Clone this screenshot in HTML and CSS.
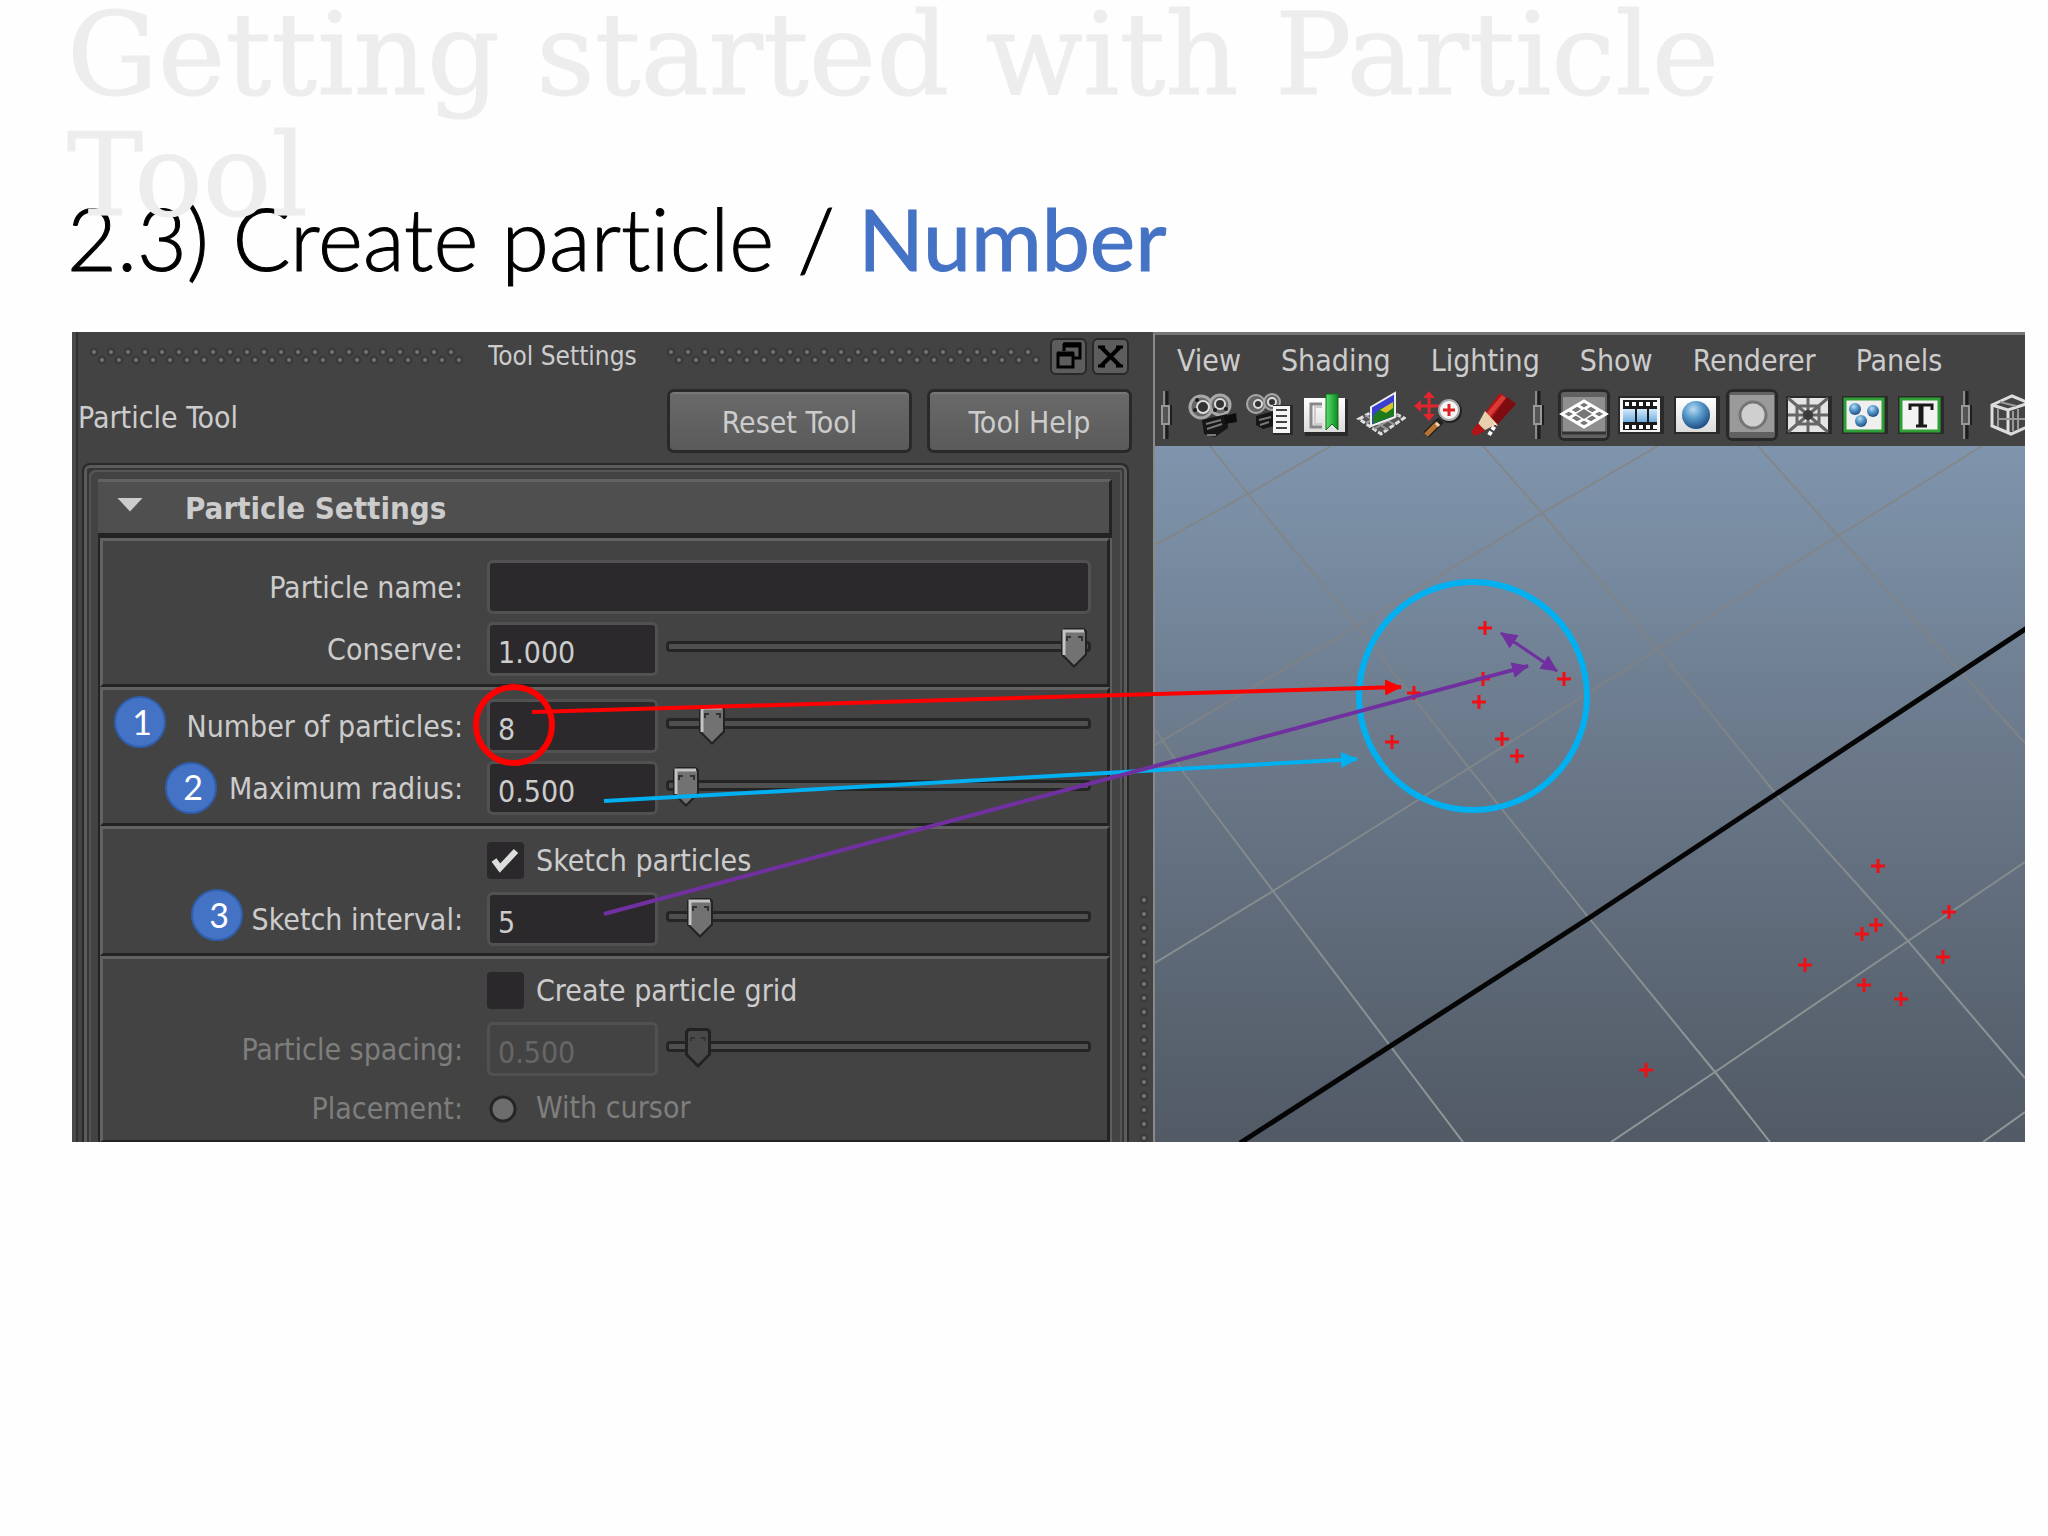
FILE: index.html
```html
<!DOCTYPE html>
<html lang="en">
<head>
<meta charset="utf-8">
<title>Getting started with Particle Tool</title>
<link rel="stylesheet" href="styles.css">
</head>
<body>
<header class="slide-head">
  <h1 class="title">Getting started with Particle Tool</h1>
  <h2 class="subtitle">2.3) Create particle / <span class="accent">Number</span></h2>
</header>

<main class="figure">
  <section class="panel" aria-label="Tool Settings">
    <div class="titlebar">
      <span class="grip"></span>
      <span class="titlebar-text">Tool Settings</span>
      <span class="grip"></span>
      <div class="window-buttons">
        <button class="window-button" type="button" aria-label="Float">
          <svg viewBox="0 0 33 33" width="33" height="33"><path d="M12 4h16v14h-6M12 4v7" fill="none" stroke="#000" stroke-width="3"/><path d="M11 5h18" stroke="#000" stroke-width="5"/><path d="M6 14h15v13H6z" fill="none" stroke="#000" stroke-width="3"/><path d="M5 14h17" stroke="#000" stroke-width="5"/></svg>
        </button>
        <button class="window-button" type="button" aria-label="Close">
          <svg viewBox="0 0 33 33" width="33" height="33"><path d="M7 7l19 19M26 7L7 26" stroke="#000" stroke-width="4"/><path d="M4 7h7M22 7h7M4 26h7M22 26h7" stroke="#000" stroke-width="3"/></svg>
        </button>
      </div>
    </div>

    <div class="toolrow">
      <span class="tool-name">Particle Tool</span>
      <button class="push reset" type="button">Reset Tool</button>
      <button class="push help" type="button">Tool Help</button>
    </div>

    <div class="frame">
      <button class="section-head" type="button"><span class="triangle"></span>Particle Settings</button>
      <form class="sections">
        <div class="group">
          <div class="row">
            <label for="pname">Particle name:</label>
            <input class="field" id="pname" type="text">
          </div>
          <div class="row">
            <label for="conserve">Conserve:</label>
            <div class="pair">
              <input class="field" id="conserve" type="text" value="1.000">
              <input class="slider" type="range" min="0" max="1000" value="1000" aria-label="Conserve slider">
            </div>
          </div>
        </div>
        <div class="group middle">
          <div class="row">
            <label for="count">Number of particles:</label>
            <div class="pair">
              <input class="field" id="count" type="text" value="8">
              <input class="slider" type="range" min="0" max="1000" value="75" aria-label="Number of particles slider">
            </div>
          </div>
          <div class="row">
            <label for="radius">Maximum radius:</label>
            <div class="pair">
              <input class="field" id="radius" type="text" value="0.500">
              <input class="slider" type="range" min="0" max="1000" value="8" aria-label="Maximum radius slider">
            </div>
          </div>
        </div>
        <div class="group toggles">
          <div class="row short">
            <span></span>
            <label class="choice"><input class="check" type="checkbox" checked>Sketch particles</label>
          </div>
          <div class="row">
            <label for="interval">Sketch interval:</label>
            <div class="pair">
              <input class="field" id="interval" type="text" value="5">
              <input class="slider" type="range" min="0" max="1000" value="44" aria-label="Sketch interval slider">
            </div>
          </div>
        </div>
        <div class="group toggles last">
          <div class="row short">
            <span></span>
            <label class="choice"><input class="check" type="checkbox">Create particle grid</label>
          </div>
          <div class="row off">
            <label for="spacing">Particle spacing:</label>
            <div class="pair">
              <input class="field" id="spacing" type="text" value="0.500" disabled>
              <input class="slider" type="range" min="0" max="1000" value="38" aria-label="Particle spacing slider" disabled>
            </div>
          </div>
          <div class="row short off">
            <span class="caption">Placement:</span>
            <label class="choice"><input class="radio" type="radio" disabled>With cursor</label>
          </div>
        </div>
      </form>
    </div>
    <span class="splitter"></span>
  </section>

  <section class="view" aria-label="Viewport">
    <nav class="menu">
      <a href="#">View</a><a href="#">Shading</a><a href="#">Lighting</a><a href="#">Show</a><a href="#">Renderer</a><a href="#">Panels</a>
    </nav>
    <svg class="defs" width="0" height="0" aria-hidden="true">
      <defs>
        <symbol id="sep" viewBox="0 0 12 48">
          <path d="M4 0v48" stroke="#8a8a8a" stroke-width="2"/><path d="M7 0v48" stroke="#1d1d1d" stroke-width="3"/>
          <path d="M2 15h7v18H2z" fill="#555" stroke="#999" stroke-width="2"/><path d="M11 14v20" stroke="#1d1d1d" stroke-width="2"/>
        </symbol>
        <radialGradient id="ball" cx=".4" cy=".3" r=".7"><stop offset="0" stop-color="#b9dcf2"/><stop offset=".45" stop-color="#5a9ccc"/><stop offset="1" stop-color="#1f4f86"/></radialGradient>
        <linearGradient id="paper" x2="0" y2="1"><stop offset="0" stop-color="#fff"/><stop offset="1" stop-color="#dcdcdc"/></linearGradient>
        <linearGradient id="green" x2="1" y2="0"><stop offset="0" stop-color="#5be06a"/><stop offset="1" stop-color="#0b8a22"/></linearGradient>
        <linearGradient id="cell" x2="0" y2="1"><stop offset="0" stop-color="#d3e9fb"/><stop offset="1" stop-color="#6faee0"/></linearGradient>
      </defs>
    </svg>
    <div class="toolbar">
      <svg class="sep"><use href="#sep"/></svg>
      <div class="tools">
        <button class="tool" type="button" aria-label="Select camera"><svg viewBox="0 0 52 52">
          <g fill="#666" stroke="#a8a8a8" stroke-width="3"><circle cx="15" cy="18" r="11"/><circle cx="34" cy="16" r="10"/></g>
          <circle cx="17" cy="18" r="6" fill="#333" stroke="#ddd" stroke-width="2"/><circle cx="34" cy="15" r="5" fill="#333" stroke="#ddd" stroke-width="2"/>
          <g fill="#1c1c1c"><circle cx="11" cy="11" r="2"/><circle cx="9" cy="21" r="2"/><circle cx="29" cy="21" r="2"/><circle cx="40" cy="20" r="2"/></g>
          <path d="M16 31l25-6 1 14-13 9-11-3z" fill="#161616"/><path d="M38 27l12-3 1 9-12 2z" fill="#0d0d0d"/><path d="M20 35l15-4M21 40l15-5M21 46h9" stroke="#777" stroke-width="2"/></svg></button>
        <button class="tool" type="button" aria-label="Camera attributes"><svg viewBox="0 0 52 52">
          <g fill="#666" stroke="#a8a8a8" stroke-width="2"><circle cx="14" cy="15" r="9"/><circle cx="30" cy="13" r="8"/></g>
          <circle cx="16" cy="15" r="4" fill="#333" stroke="#ddd" stroke-width="2"/><circle cx="30" cy="13" r="4" fill="#333" stroke="#ddd" stroke-width="2"/>
          <path d="M14 27l18-5v15l-11 3-7-4z" fill="#161616"/><path d="M17 31l12-3M18 36l9-3" stroke="#777" stroke-width="2"/>
          <path d="M31 16h20v30H31z" fill="#2b2b2b"/><path d="M31 17h17v27H31z" fill="#f5f5f5"/><path d="M34 21h11M34 27h11M34 33h11M34 39h11" stroke="#444" stroke-width="2"/></svg></button>
        <button class="tool" type="button" aria-label="Bookmarks"><svg viewBox="0 0 52 52">
          <path d="M7 10h43v37H7z" fill="#2a2a2a"/><path d="M6 9h41v34H6z" fill="url(#paper)"/><path d="M24 15H13v23h11" fill="none" stroke="#888" stroke-width="3"/><path d="M24 18h-7v17h7" fill="none" stroke="#ccc" stroke-width="2"/>
          <path d="M28 5h12v36l-6-6-6 6z" fill="url(#green)" stroke="#136b20"/></svg></button>
        <button class="tool" type="button" aria-label="Image plane"><svg viewBox="0 0 52 52">
          <path d="M5 30l22-12 23 11-23 16z" fill="#555" stroke="#ddd" stroke-width="3" stroke-dasharray="5 2"/><path d="M11 26l23 15M18 22l23 14M12 34l24-13M20 40l24-14" stroke="#999" stroke-width="2"/>
          <path d="M17 18l24-14v24L17 37z" fill="#3a3fd0" stroke="#eee" stroke-width="2"/><path d="M19 27l8-8 6 3 7-8v13L19 35z" fill="#1d7a1d"/><path d="M26 21l8-5 5-3v6l-7 5z" fill="#d9c22b"/></svg></button>
        <button class="tool" type="button" aria-label="2D pan and zoom"><svg viewBox="0 0 52 52">
          <path d="M19 4v26M6 17h26" stroke="#e0262c" stroke-width="3"/><path d="M13 9l6-7 6 7zM13 25l6 7 6-7zM11 11l-7 6 7 6z" fill="#e0262c"/>
          <path d="M31 31L16 46" stroke="#222" stroke-width="8"/><path d="M28 34L16 46" stroke="#b87333" stroke-width="5"/><path d="M26 34l3 3" stroke="#f2d6b0" stroke-width="3"/>
          <circle cx="40" cy="22" r="12" fill="#222"/><circle cx="39" cy="21" r="10" fill="#f4f4f4" stroke="#aaa" stroke-width="2"/><path d="M39 15v12M33 21h12" stroke="#d22" stroke-width="3"/></svg></button>
        <button class="tool" type="button" aria-label="Grease pencil"><svg viewBox="0 0 52 52">
          <path d="M34 4l16 11-20 22-13-11z" fill="#b31217"/><path d="M41 8l9 7-20 22-6-5z" fill="#7d0c10"/><path d="M36 6l4 3-17 20-4-3z" fill="#d63b35"/>
          <path d="M19 22l12 13-12 6-7-6z" fill="#e8cfae"/><path d="M12 34l7 8-10 5-4-4z" fill="#b31217"/><path d="M23 46l7-11" stroke="#fff" stroke-width="4" stroke-dasharray="4 2"/></svg></button>
      </div>
      <svg class="sep"><use href="#sep"/></svg>
      <div class="tools">
        <button class="tool pressed" type="button" aria-label="Grid"><svg viewBox="0 0 52 52">
          <path d="M5 8h42v36H5z" fill="#8f8f8f"/><path d="M4 25l22-13 22 13-22 13z" fill="#777" stroke="#fff" stroke-width="3"/><path d="M11 21l22 13M19 16l22 13M11 29l22-13M19 34l22-13" stroke="#fff" stroke-width="3"/><path d="M26 20l8 5-8 5-8-5z" fill="#777"/><path d="M4 44h44" stroke="#333" stroke-width="3"/></svg></button>
        <button class="tool" type="button" aria-label="Film gate"><svg viewBox="0 0 52 52">
          <path d="M4 7h46v38H4z" fill="#2a2a2a"/><path d="M6 9h40v34H6z" fill="#f3f3f3"/><path d="M9 11h34v30H9z" fill="#1a1a1a"/><path d="M9 20h34v13H9z" fill="url(#cell)"/><path d="M22 19v15M34 19v15" stroke="#1a1a1a" stroke-width="2"/><path d="M11 15h32M11 38h32" stroke="#fff" stroke-width="4" stroke-dasharray="4 3"/></svg></button>
        <button class="tool" type="button" aria-label="Smooth shade"><svg viewBox="0 0 52 52">
          <path d="M4 7h46v38H4z" fill="#2a2a2a"/><path d="M6 9h40v34H6z" fill="url(#paper)"/><circle cx="26" cy="26" r="14" fill="url(#ball)"/></svg></button>
        <button class="tool pressed" type="button" aria-label="Flat shade"><svg viewBox="0 0 52 52">
          <path d="M4 6h44v37H4z" fill="#9a9a9a"/><circle cx="27" cy="26" r="13" fill="#cfcfcf" stroke="#757575" stroke-width="3"/></svg></button>
        <button class="tool" type="button" aria-label="Wireframe"><svg viewBox="0 0 52 52">
          <path d="M4 7h46v38H4z" fill="#2a2a2a"/><path d="M6 9h40v34H6z" fill="#e4e4e4"/><path d="M6 9l40 34M46 9L6 43M26 9v34M6 26h40M15 17h22v18H15z" fill="none" stroke="#666" stroke-width="3"/><circle cx="26" cy="26" r="5" fill="#3a3a3a"/></svg></button>
        <button class="tool" type="button" aria-label="Particles"><svg viewBox="0 0 52 52">
          <path d="M4 7h46v38H4z" fill="#2a2a2a"/><path d="M7 10h38v32H7z" fill="#efefef" stroke="#2fa036" stroke-width="3"/><circle cx="17" cy="20" r="6" fill="url(#ball)"/><circle cx="35" cy="22" r="6" fill="url(#ball)"/><circle cx="23" cy="32" r="6" fill="url(#ball)"/></svg></button>
        <button class="tool" type="button" aria-label="Textured"><svg viewBox="0 0 52 52">
          <path d="M4 7h46v38H4z" fill="#2a2a2a"/><path d="M7 10h38v32H7z" fill="#f3f3f3" stroke="#2fa036" stroke-width="3"/><path d="M16 21v-5h22v5M22 37h11" fill="none" stroke="#1a1a1a" stroke-width="3"/><path d="M27 16v21" stroke="#1a1a1a" stroke-width="5"/></svg></button>
      </div>
      <svg class="sep"><use href="#sep"/></svg>
      <div class="tools">
        <button class="tool" type="button" aria-label="Isolate"><svg viewBox="0 0 52 52">
          <path d="M6 16l20-9 17 7v23l-18 8-19-8z" fill="#444" stroke="#ddd" stroke-width="3"/><path d="M6 16l16 5 21-7M22 21v22" fill="none" stroke="#ddd" stroke-width="3"/><path d="M12 19v19M27 22v20M32 20v20M14 13l16 4M11 30h28" stroke="#999" stroke-width="2"/></svg></button>
      </div>
    </div>
    <svg class="scene" viewBox="1155 446 870 696" preserveAspectRatio="xMinYMin slice" aria-hidden="true">
      <defs>
        <linearGradient id="wire" gradientUnits="userSpaceOnUse" x1="0" y1="446" x2="0" y2="1142"><stop offset="0" stop-color="#84878a"/><stop offset=".35" stop-color="#7d8185"/><stop offset="1" stop-color="#909897"/></linearGradient>
      </defs>
      <g fill="none" stroke="url(#wire)" stroke-width="2">
        <path d="M1155 545L1248 494 1331 446"/>
        <path d="M1155 745L1357 626 1542 513 1658 446"/>
        <path d="M1155 963L1273 891 1469 768 1658 649 1838 536 1982 446"/>
        <path d="M1611 1142L1715 1072 1908 941 2025 862"/>
        <path d="M1983 1142L2025 1112"/>
        <path d="M1155 729L1184 773 1273 891 1391 1047 1463 1142"/>
        <path d="M1210 446L1248 494 1357 626 1469 768 1589 918 1715 1072 1770 1142"/>
        <path d="M1483 446L1542 513 1658 649 1776 794 1908 941 2025 1078"/>
        <path d="M1758 446L1838 536 2025 743"/>
      </g>
      <path d="M1240 1143L1589 918 1776 794 2027 628" fill="none" stroke="#050505" stroke-width="5"/>
      <defs><path id="p" d="M-7 0H7M0-7V7" stroke="#f00f14" stroke-width="3"/></defs>
      <g>
        <use href="#p" x="1485" y="628"/><use href="#p" x="1564" y="679"/><use href="#p" x="1483" y="679"/><use href="#p" x="1414" y="693"/>
        <use href="#p" x="1479" y="702"/><use href="#p" x="1392" y="742"/><use href="#p" x="1502" y="739"/><use href="#p" x="1517" y="756"/>
        <use href="#p" x="1878" y="866"/><use href="#p" x="1949" y="912"/><use href="#p" x="1876" y="925"/><use href="#p" x="1862" y="934"/>
        <use href="#p" x="1943" y="957"/><use href="#p" x="1805" y="965"/><use href="#p" x="1864" y="985"/><use href="#p" x="1901" y="999"/>
        <use href="#p" x="1646" y="1070"/>
      </g>
    </svg>
  </section>

  <svg class="notes" viewBox="72 332 1953 810" preserveAspectRatio="xMinYMin meet">
    <defs>
      <marker id="hr" markerUnits="userSpaceOnUse" markerWidth="18" markerHeight="16" refX="16" refY="8" orient="auto"><path d="M0 0l17 8-17 8z" fill="#f00"/></marker>
      <marker id="hb" markerUnits="userSpaceOnUse" markerWidth="18" markerHeight="16" refX="16" refY="8" orient="auto"><path d="M0 0l17 8-17 8z" fill="#00b0f0"/></marker>
      <marker id="hp" markerUnits="userSpaceOnUse" markerWidth="18" markerHeight="16" refX="16" refY="8" orient="auto-start-reverse"><path d="M0 0l17 8-17 8z" fill="#7030a0"/></marker>
    </defs>
    <g fill="none" stroke-width="4">
      <circle cx="514" cy="725" r="38" stroke="#f00" stroke-width="6"/>
      <circle cx="1473" cy="696" r="114" stroke="#00b0f0" stroke-width="6"/>
      <path d="M532 712L1401 687" stroke="#f00" marker-end="url(#hr)"/>
      <path d="M604 801L1357 759" stroke="#00b0f0" marker-end="url(#hb)"/>
      <path d="M604 914L1528 666" stroke="#7030a0" marker-end="url(#hp)"/>
      <path d="M1501 633L1557 671" stroke="#7030a0" stroke-width="3" marker-start="url(#hp)" marker-end="url(#hp)"/>
    </g>
    <g class="badge">
      <circle cx="140" cy="722" r="25"/><text x="142" y="735">1</text>
      <circle cx="191" cy="788" r="25"/><text x="193" y="800">2</text>
      <circle cx="217" cy="915" r="25"/><text x="219" y="928">3</text>
    </g>
  </svg>
</main>
</body>
</html>
```
FILE: styles.css
```css
* { box-sizing: border-box; }

body {
  margin: 0;
  background: #fefefe;
  color: #ccc;
  font: 30px/36px "DejaVu Sans Condensed", "DejaVu Sans", sans-serif;
}

button, input {
  margin: 0;
  padding: 0;
  border: 0;
  font: inherit;
  color: inherit;
}

/* Slide heading: the pale title runs down over the subtitle */
.slide-head {
  display: flow-root;
  height: 332px;
  padding-left: 67px;
}

.title {
  position: relative;
  z-index: 1;
  margin: -6px 0 0;
  max-width: 1750px;
  color: #ededed;
  font: 400 114px/121px "DejaVu Serif", serif;
  -webkit-text-stroke: 1px #ededed;
}

.subtitle {
  margin: -53px 0 0;
  color: #000;
  font: 300 86px/110px Lato, sans-serif;
  font-variant-ligatures: none;
  -webkit-text-stroke: 1px currentColor;
}

.accent {
  color: #4472c4;
  font-weight: 400;
}

.figure {
  position: relative;
  display: grid;
  grid-template-columns: 1081fr 872fr;
  margin: 0 23px 0 72px;
  overflow: hidden;
  background: #444344;
}

/* Tool settings panel */
.panel {
  position: relative;
  padding: 0 24px 0 6px;
  border-left: 4px solid #4a494a;
  box-shadow: inset 2px 0 #323132;
}

.titlebar {
  display: flex;
  align-items: center;
  height: 48px;
  padding-left: 8px;
}

.titlebar-text {
  margin: 0 30px 0 25px;
  font-size: 26px;
}

.grip {
  flex: 1;
  height: 18px;
  background:
    radial-gradient(circle at 4px 5px, #777 1px, #333 3px, transparent 5px) 0 0 / 17px 18px,
    radial-gradient(circle at 12px 13px, #777 1px, #333 3px, transparent 5px) 0 0 / 17px 18px;
}

.window-buttons {
  display: flex;
  gap: 5px;
  margin-left: 10px;
}

.window-button {
  width: 37px;
  height: 37px;
  border: 2px solid #2a292a;
  border-radius: 6px;
  background: #5e5d5e;
}

.window-button svg { display: block; }

.toolrow {
  display: flex;
  align-items: center;
  margin: 9px -3px 10px -4px;
}

.tool-name {
  flex: 1;
  padding-bottom: 6px;
}

.push {
  height: 64px;
  padding-top: 4px;
  border: 3px solid #2a292a;
  border-radius: 7px;
  background: linear-gradient(#6b6a6b, #5a5a5a);
  box-shadow: inset 0 2px #777;
}

.reset { width: 245px; margin-right: 15px; }
.help { width: 205px; }

.frame {
  padding: 14px 15px 0 14px;
  border: 2px solid #2a292a;
  border-bottom: 0;
  border-radius: 8px 8px 0 0;
  box-shadow: inset 0 3px #5c5b5c, inset 3px 0 #5c5b5c, inset -3px 0 #5c5b5c,
    inset 5px 5px #373637, inset -5px 0 #373637, inset 7px 7px #555455, inset -7px 0 #555455;
}

.section-head {
  display: flex;
  align-items: center;
  width: 100%;
  height: 59px;
  padding-left: 19px;
  border-top: 3px solid #636263;
  border-right: 3px solid #242324;
  border-bottom: 5px solid #242324;
  background: #504f50;
  font-size: 31px;
  font-weight: 700;
}

.triangle {
  width: 26px;
  height: 14px;
  margin: 0 42px 6px 0;
  background: #ccc;
  clip-path: polygon(0 0, 100% 0, 50% 100%);
}

.sections {
  border-left: 2px solid #242324;
  border-right: 2px solid #5f5e5f;
}

.group {
  display: flex;
  flex-direction: column;
  gap: 8px;
  padding: 19px 16px 8px 0;
  border-top: 3px solid #636263;
  border-right: 3px solid #242324;
  border-bottom: 3px solid #242324;
  border-left: 3px solid #636263;
}

.middle { padding-top: 9px; }
.toggles { gap: 13px; padding-top: 13px; padding-bottom: 7px; }
.last { padding-bottom: 14px; border-bottom-width: 2px; }

.row {
  display: grid;
  grid-template-columns: 360px 1fr;
  align-items: center;
  gap: 24px;
  height: 54px;
}

.row.short { height: 37px; }

.row > label:first-child, .caption {
  padding-top: 2px;
  text-align: right;
}

.off { color: #7e7e7c; }

.pair {
  display: flex;
  align-items: center;
  gap: 8px;
}

.field {
  width: 100%;
  height: 54px;
  padding: 6px 8px 0;
  border: 3px solid #525152;
  border-radius: 6px;
  background: #2b292b;
}

.pair .field { flex: none; width: 171px; }

.field:disabled {
  background: #444344;
  color: #666;
}

.slider {
  flex: 1;
  min-width: 0;
  height: 42px;
  margin-bottom: 5px;
  background: none;
  appearance: none;
}

.slider::-webkit-slider-runnable-track {
  height: 11px;
  border: 3px solid #262526;
  border-radius: 4px;
  background: #504f50;
}

.slider::-webkit-slider-thumb {
  width: 28px;
  height: 42px;
  margin-top: -17px;
  appearance: none;
  background: url("data:image/svg+xml,%3Csvg xmlns='http://www.w3.org/2000/svg' width='28' height='42'%3E%3Cpath d='M4 1h20l3 3v24L14 41 1 28V4z' fill='%23222'/%3E%3Cpath d='M5 3h18l2 2v22L14 38 3 27V5z' fill='%23737273'/%3E%3Cpath d='M4 28V4h20' fill='none' stroke='%23c4c4c4' stroke-width='3'/%3E%3Cpath d='M7 14v-4h4M22 14v-4h-4' fill='none' stroke='%23333' stroke-width='2'/%3E%3C/svg%3E");
}

.slider:disabled::-webkit-slider-thumb {
  background: url("data:image/svg+xml,%3Csvg xmlns='http://www.w3.org/2000/svg' width='28' height='42'%3E%3Cpath d='M4 1h20l3 3v24L14 41 1 28V4z' fill='%23222'/%3E%3Cpath d='M5 4h18l1 2v21L14 37 4 27V6z' fill='%234a494a'/%3E%3Cpath d='M7 14v-3h4M21 14v-3h-4' fill='none' stroke='%23333' stroke-width='2'/%3E%3C/svg%3E");
}

.choice {
  display: flex;
  align-items: center;
  gap: 12px;
}

.check, .radio {
  flex: none;
  width: 37px;
  height: 37px;
  appearance: none;
}

.check {
  border-radius: 4px;
  background: #2a282a;
}

.check:checked {
  background: #2a282a url("data:image/svg+xml,%3Csvg xmlns='http://www.w3.org/2000/svg' width='37' height='37'%3E%3Cpath d='M7 18l6 8L29 9' fill='none' stroke='%23ddd' stroke-width='6'/%3E%3C/svg%3E");
}

.radio {
  background: radial-gradient(circle at 16px 19px, #6e6d6e 10px, #262526 11px, #262526 13px, transparent 14px);
}

.splitter {
  position: absolute;
  right: 5px;
  bottom: 0;
  width: 8px;
  height: 248px;
  background: radial-gradient(circle at 4px 6px, #7a7a7a 1px, #333 3px, transparent 5px) 0 0 / 8px 14px;
}

/* Viewport */
.view {
  display: flex;
  flex-direction: column;
  min-width: 0;
  border-top: 3px solid #777677;
  border-left: 2px solid #8a898a;
}

.menu {
  display: flex;
  gap: 40px;
  padding: 8px 0 5px 22px;
}

.menu a {
  color: inherit;
  text-decoration: none;
}

.defs { position: absolute; }

.toolbar {
  display: flex;
  align-items: center;
  gap: 14px;
  height: 62px;
  padding-left: 5px;
  overflow: hidden;
}

.sep {
  flex: none;
  width: 12px;
  height: 48px;
}

.tools {
  display: flex;
  flex: none;
  gap: 4px;
}

.tool {
  width: 52px;
  height: 52px;
  border-radius: 6px;
  background: none;
}

.pressed {
  background: #626162;
  box-shadow: inset 0 0 0 3px #2a292a;
}

.tool svg {
  display: block;
  width: 52px;
  height: 52px;
}

.scene {
  flex: 1 1 0;
  width: 100%;
  min-height: 0;
  background: linear-gradient(#7f95ad, #6a7889 45%, #515a65);
}

/* Call-outs drawn over both panes */
.notes {
  position: absolute;
  inset: 0;
  width: 100%;
  height: 100%;
  pointer-events: none;
}

.badge circle {
  fill: #4472c4;
  stroke: #2f5fac;
  stroke-width: 2px;
}

.badge text {
  fill: #fff;
  font: 34px Lato, sans-serif;
  text-anchor: middle;
}
```
